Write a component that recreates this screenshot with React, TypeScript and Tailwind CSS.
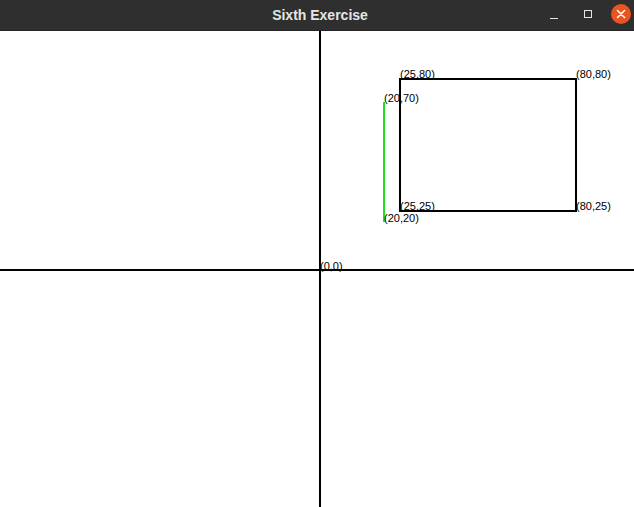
export default function App() {
  const labels: { x: number; y: number; t: string }[] = [
    { x: 320, y: 270, t: "(0,0)" },
    { x: 400, y: 78, t: "(25,80)" },
    { x: 576, y: 78, t: "(80,80)" },
    { x: 400, y: 210, t: "(25,25)" },
    { x: 576, y: 210, t: "(80,25)" },
    { x: 384, y: 102, t: "(20,70)" },
    { x: 384, y: 222, t: "(20,20)" },
  ];
  const oy = 31;
  return (
    <div className="w-[634px] h-[507px] flex flex-col bg-white overflow-hidden">
      <div className="h-[31px] bg-[#2f2f2f] border-b border-[#262626] flex items-center relative shrink-0">
        <div className="flex-1 text-center text-[14px] font-bold text-[#e6e6e6] pl-[6px]" style={{ fontFamily: '"Liberation Sans", Arial, sans-serif' }}>
          Sixth Exercise
        </div>
        <div className="absolute right-[3px] top-[4px] flex items-center gap-[17px]">
          <div className="w-[8px] h-[1px] bg-[#e6e6e6] mt-[8px]" />
          <div className="w-[8px] h-[8px] border border-[#e6e6e6] ml-[9px]" />
          <div className="w-[20px] h-[20px] rounded-full bg-[#e95420] flex items-center justify-center ml-[2px]">
            <svg width="10" height="10" viewBox="0 0 10 10">
              <path d="M1.5 1.5 L8.5 8.5 M8.5 1.5 L1.5 8.5" stroke="#ffffff" strokeWidth="1.6" strokeLinecap="round" />
            </svg>
          </div>
        </div>
      </div>
      <div className="flex-1 relative">
        <svg width="634" height="476" viewBox="0 0 634 476" className="block" shapeRendering="crispEdges">
          <line x1="320" y1="0" x2="320" y2="476" stroke="#000" strokeWidth="2" />
          <line x1="0" y1={270 - oy} x2="634" y2={270 - oy} stroke="#000" strokeWidth="2" />
          <rect x="400" y={79 - oy} width="176" height="132" fill="none" stroke="#000" strokeWidth="2" />
          <line x1="384" y1={102 - oy} x2="384" y2={222 - oy} stroke="#22e01a" strokeWidth="2" />
          {labels.map((l) => (
            <text
              key={l.t}
              x={l.x}
              y={l.y - oy}
              fontSize="11"
              fill="#000"
              style={{ fontFamily: '"Liberation Sans", Arial, sans-serif' }}
            >
              {l.t}
            </text>
          ))}
        </svg>
      </div>
    </div>
  );
}
